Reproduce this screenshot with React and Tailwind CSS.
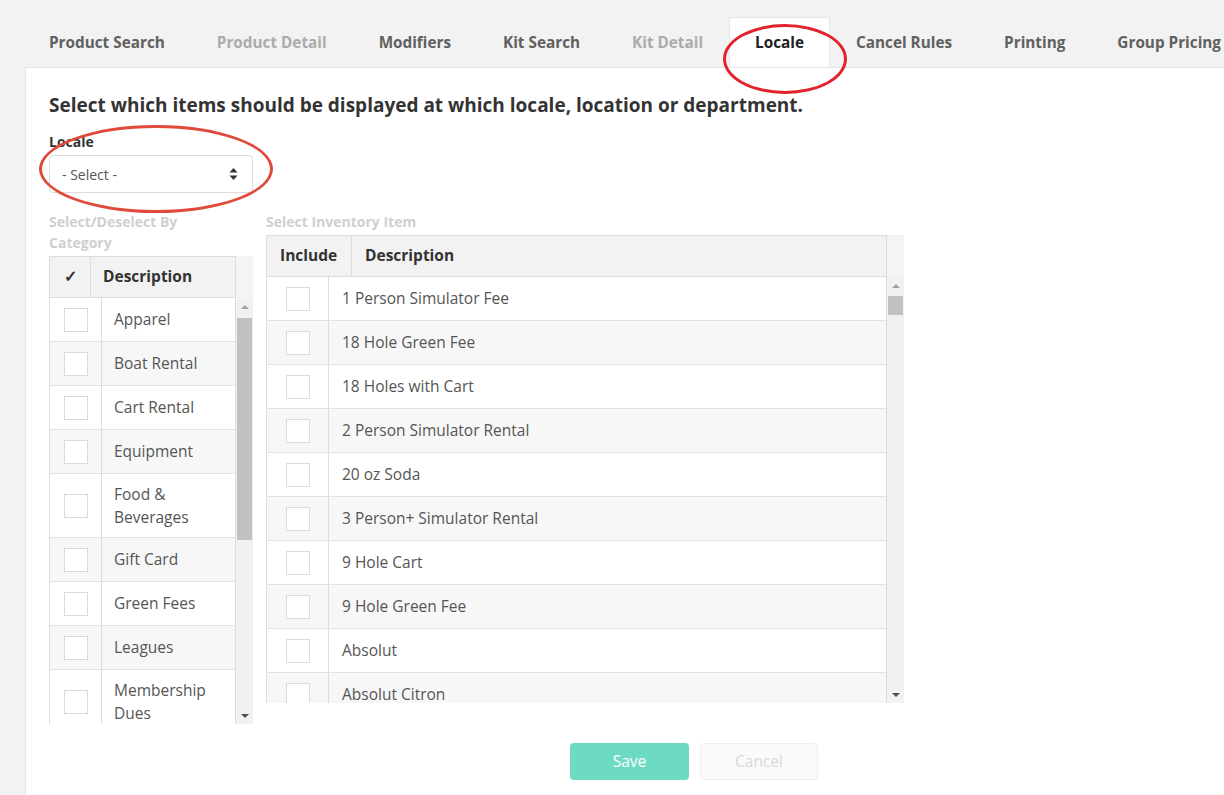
import React from 'react';

const tabs = [
  { label: 'Product Search' },
  { label: 'Product Detail', disabled: true },
  { label: 'Modifiers' },
  { label: 'Kit Search' },
  { label: 'Kit Detail', disabled: true },
  { label: 'Locale', active: true },
  { label: 'Cancel Rules' },
  { label: 'Printing' },
  { label: 'Group Pricing' },
];

const categories = [
  { name: 'Apparel' },
  { name: 'Boat Rental' },
  { name: 'Cart Rental' },
  { name: 'Equipment' },
  { name: 'Food & Beverages', tall: true },
  { name: 'Gift Card' },
  { name: 'Green Fees' },
  { name: 'Leagues' },
  { name: 'Membership Dues', tall: true },
];

const items = [
  '1 Person Simulator Fee',
  '18 Hole Green Fee',
  '18 Holes with Cart',
  '2 Person Simulator Rental',
  '20 oz Soda',
  '3 Person+ Simulator Rental',
  '9 Hole Cart',
  '9 Hole Green Fee',
  'Absolut',
  'Absolut Citron',
];

const Box = () => <div className="w-[24px] h-[24px] border border-[#dedbd6] bg-white" />;

// fake classic scrollbar, drawn beside the table body
const ScrollBar = ({ thumbTop, thumbHeight }) => (
  <div className="w-[17px] h-full bg-[#f1f1f1] flex flex-col items-center">
    <div className="h-[17px] flex items-center justify-center">
      <div className="w-0 h-0 border-l-[4px] border-r-[4px] border-b-[4px] border-l-transparent border-r-transparent border-b-[#a3a3a3]" />
    </div>
    <div className="w-[15px] bg-[#c1c1c1]" style={{ marginTop: thumbTop, height: thumbHeight }} />
    <div className="flex-1" />
    <div className="h-[17px] flex items-center justify-center">
      <div className="w-0 h-0 border-l-[4px] border-r-[4px] border-t-[4px] border-l-transparent border-r-transparent border-t-[#505050]" />
    </div>
  </div>
);

export default function App() {
  return (
    <div className="relative min-h-screen bg-[#f2f2f2] text-[#555]" style={{ fontFamily: '"Open Sans", "Liberation Sans", sans-serif' }}>
      {/* tabs */}
      <div className="flex pl-[23px] pt-[17px] whitespace-nowrap overflow-hidden">
        {tabs.map((t) => (
          <div
            key={t.label}
            className={
              'h-[50px] px-[25px] flex items-center text-[15.3px] font-bold border border-b-0 ' +
              (t.active
                ? 'bg-white border-[#e6e6e6] rounded-t-[3px] text-[#222] -mb-px'
                : t.disabled
                ? 'border-transparent text-[#ababab]'
                : 'border-transparent text-[#606060]')
            }
          >
            {t.label}
          </div>
        ))}
      </div>

      {/* panel */}
      <div className="ml-[25px] bg-white border-t border-l border-[#e6e6e6] pl-[23px] pt-[24px] pb-[15px] min-h-[728px]">
        <h1 className="text-[19px] font-bold text-[#333] leading-[26px]">
          Select which items should be displayed at which locale, location or department.
        </h1>

        <div className="mt-[13px] text-[14px] font-bold text-[#333] leading-[21px]">Locale</div>
        <div className="mt-[3px] w-[204px] h-[38px] border border-[#dcdcdc] rounded-[4px] flex items-center justify-between pl-[12px] pr-[14px] text-[14px] text-[#555]">
          <span>- Select -</span>
          <svg width="9" height="14" viewBox="0 0 9 14">
            <path d="M4.5 1 L8.5 5.5 L0.5 5.5 Z" fill="#333" />
            <path d="M4.5 13 L8.5 8.5 L0.5 8.5 Z" fill="#333" />
          </svg>
        </div>

        <div className="mt-[18px] flex gap-[13px] items-start">
          {/* categories */}
          <div className="w-[204px]">
            <div className="w-[187px] text-[14px] font-bold text-[#cfcfcf] leading-[21px]">Select/Deselect By Category</div>
            <div className="mt-[3px] flex">
              <div className="w-[187px]">
                <div className="h-[42px] flex bg-[#f2f2f2] border border-[#dcdcdc] text-[15.5px] font-bold text-[#333]">
                  <div className="w-[41px] border-r border-[#dcdcdc] flex items-center justify-center">✓</div>
                  <div className="flex items-center pl-[12px]">Description</div>
                </div>
                <div className="h-[426px] overflow-hidden border-l border-r border-[#dcdcdc]">
                  {categories.map((c, i) => (
                    <div
                      key={c.name}
                      className={
                        'flex border-b border-[#e2e2e2] text-[15.5px] ' +
                        (c.tall ? 'h-[64px] ' : 'h-[44px] ') +
                        (i % 2 ? 'bg-[#f7f7f7]' : 'bg-white')
                      }
                    >
                      <div className="w-[52px] shrink-0 border-r border-[#dcdcdc] flex items-center justify-center">
                        <Box />
                      </div>
                      <div className="flex items-center pl-[12px] pr-[8px] leading-[23px]">{c.name}</div>
                    </div>
                  ))}
                </div>
              </div>
              <div className="h-[468px] flex flex-col bg-[#f4f4f4]">
                <div className="h-[42px]" />
                <div className="h-[426px]">
                  <ScrollBar thumbTop={3} thumbHeight={222} />
                </div>
              </div>
            </div>
          </div>

          {/* inventory items */}
          <div className="w-[639px]">
            <div className="text-[14px] font-bold text-[#cfcfcf] leading-[21px]">Select Inventory Item</div>
            <div className="mt-[3px] flex">
              <div className="w-[621px]">
                <div className="h-[42px] flex bg-[#f2f2f2] border border-[#dcdcdc] text-[15.5px] font-bold text-[#333]">
                  <div className="w-[85px] border-r border-[#dcdcdc] flex items-center pl-[13px]">Include</div>
                  <div className="flex items-center pl-[13px]">Description</div>
                </div>
                <div className="h-[426px] overflow-hidden border-l border-r border-[#dcdcdc]">
                  {items.map((name, i) => (
                    <div
                      key={name}
                      className={'h-[44px] flex border-b border-[#e2e2e2] text-[15.5px] ' + (i % 2 ? 'bg-[#f7f7f7]' : 'bg-white')}
                    >
                      <div className="w-[62px] shrink-0 border-r border-[#dcdcdc] flex items-center justify-center">
                        <Box />
                      </div>
                      <div className="flex items-center pl-[13px]">{name}</div>
                    </div>
                  ))}
                </div>
              </div>
              <div className="h-[468px] flex flex-col bg-[#f4f4f4]">
                <div className="h-[42px]" />
                <div className="h-[426px]">
                  <ScrollBar thumbTop={2} thumbHeight={19} />
                </div>
              </div>
            </div>
          </div>
        </div>

        <div className="mt-[19px] ml-[521px] flex gap-[11px]">
          <button className="w-[119px] h-[37px] rounded-[4px] bg-[#6ddbc3] text-white text-[15.5px]">Save</button>
          <button className="w-[118px] h-[37px] rounded-[4px] bg-[#fafafa] border border-[#ededed] text-[#d9d9d9] text-[15.5px]">Cancel</button>
        </div>
      </div>

      {/* red annotation ellipses */}
      <div className="absolute left-[723px] top-[24px] w-[124px] h-[70px] rounded-[50%] border-[3px] border-[#e3232b] pointer-events-none" />
      <div className="absolute left-[39px] top-[125px] w-[234px] h-[88px] rounded-[50%] border-[3px] border-[#df4a3a] pointer-events-none" />
    </div>
  );
}
